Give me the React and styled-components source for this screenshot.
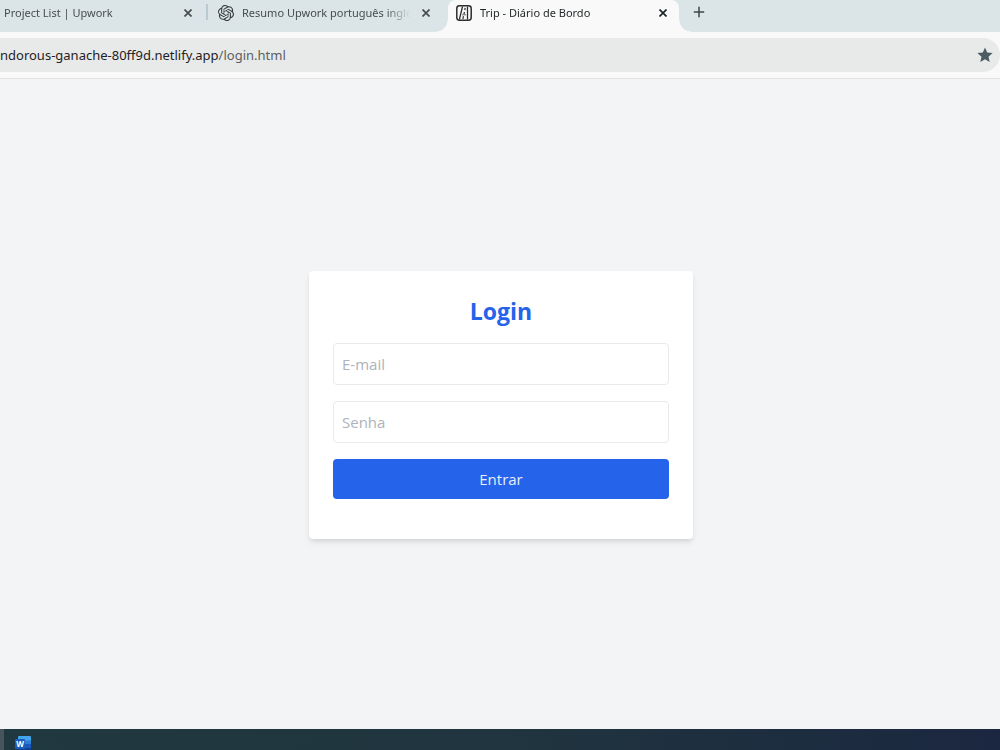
import React from 'react';
import styled, { createGlobalStyle } from 'styled-components';
import { SiOpenai } from 'react-icons/si';

const GlobalStyle = createGlobalStyle`
  *, *::before, *::after { box-sizing: border-box; }
  body {
    margin: 0;
    font-family: "Open Sans", "Noto Sans", sans-serif;
    background: #f2f4f6;
  }
  button, input { font: inherit; }
`;

const Screen = styled.div`
  min-height: 100vh;
  display: flex;
  flex-direction: column;
`;

const TabStrip = styled.nav`
  height: 32px;
  display: flex;
  background: #dbe4e7;
  overflow: hidden;
  font-family: "Noto Sans", "Open Sans", sans-serif;
`;

const Tab = styled.div`
  position: relative;
  flex: none;
  width: ${(p) => p.$width}px;
  height: 32px;
  padding: 0 ${(p) => p.$end}px 7px ${(p) => p.$start}px;
  display: flex;
  align-items: center;
  gap: 8px;
  font-size: 11px;
  line-height: 16px;
  color: ${(p) => (p.$active ? '#1f2426' : '#454d50')};
  background: ${(p) => (p.$active ? '#f9f9f9' : 'transparent')};
  border-radius: 8px 8px 0 0;

  &::before, &::after {
    content: ${(p) => (p.$active ? '""' : 'none')};
    position: absolute;
    bottom: 0;
    width: 12px;
    height: 12px;
  }
  &::before {
    right: 100%;
    background: radial-gradient(circle at 0 0, transparent 11px, #f9f9f9 12px);
  }
  &::after {
    left: 100%;
    background: radial-gradient(circle at 100% 0, transparent 11px, #f9f9f9 12px);
  }
`;

const TabTitle = styled.span`
  flex: 1;
  min-width: 0;
  overflow: hidden;
  white-space: nowrap;
  mask-image: linear-gradient(to left, transparent, #000 24px);
`;

const Divider = styled.span`
  flex: none;
  width: 2px;
  height: 16px;
  margin-top: 4px;
  background: #b9cbd1;
`;

const IconButton = styled.button`
  flex: none;
  width: 16px;
  height: 16px;
  padding: 0;
  border: 0;
  display: grid;
  place-items: center;
  background: none;
  color: inherit;
`;

const NewTab = styled(IconButton)`
  margin: 4px 0 0 12px;
  color: #3d474a;
`;

const Toolbar = styled.header`
  height: 47px;
  padding: 6px 0;
  background: #f9f9f9;
  border-bottom: 1px solid #e2e3e4;
`;

const AddressBar = styled.div`
  height: 34px;
  padding-right: 7px;
  display: flex;
  align-items: center;
  justify-content: space-between;
  background: #e8eaea;
  border-radius: 0 17px 17px 0;
  font-family: "Noto Sans", "Open Sans", sans-serif;
  font-size: 13px;
  line-height: 20px;
  color: #5b5f61;
`;

const Host = styled.span`
  color: #1f2224;
`;

const Main = styled.main`
  flex: 1;
  padding: 2px 0 0 2px;
  display: grid;
  place-items: center;
  background: #f2f4f6;
`;

const Card = styled.form`
  width: 100%;
  max-width: 384px;
  padding: 24px 24px 40px;
  display: flex;
  flex-direction: column;
  gap: 16px;
  background: #fff;
  border-radius: 4px;
  box-shadow: 0 4px 6px -1px rgba(0, 0, 0, 0.1), 0 2px 4px -1px rgba(0, 0, 0, 0.06);
`;

const Title = styled.h1`
  margin: 0;
  font-size: 23px;
  line-height: 32px;
  font-weight: 700;
  text-align: center;
  color: #2563eb;
`;

const Field = styled.input`
  width: 100%;
  height: 42px;
  padding: 8px;
  border: 1px solid #e8eaed;
  border-radius: 4px;
  background: #fff;
  font-size: 15px;
  line-height: 24px;
  &::placeholder { color: #adb2bb; opacity: 1; }
`;

const Submit = styled.button`
  height: 40px;
  padding: 8px;
  border: 0;
  border-radius: 4px;
  background: #2563eb;
  color: #e9effd;
  font-size: 15px;
  line-height: 24px;
`;

const Taskbar = styled.footer`
  height: 21px;
  padding: 6px 0 0 11px;
  overflow: hidden;
  border-left: 4px solid #48545b;
  background: linear-gradient(to right, #20383f, #20353f 50%, #1b2740);
`;

const CloseIcon = () => (
  <svg width="8" height="8" viewBox="0 0 8 8" stroke="currentColor" strokeWidth="1.7" aria-hidden="true">
    <path d="M.5.5l7 7M7.5.5l-7 7" />
  </svg>
);

const PlusIcon = () => (
  <svg width="12" height="12" viewBox="0 0 12 12" stroke="currentColor" strokeWidth="1.5" aria-hidden="true">
    <path d="M6 .8v10.4M.8 6h10.4" />
  </svg>
);

const StarIcon = () => (
  <svg width="16" height="16" viewBox="0 0 16 16" fill="#4b5d62" aria-hidden="true">
    <path d="M8 .6l2.2 5 5.4.5-4.1 3.6 1.2 5.3L8 12.200 3.3 15l1.2-5.3L.4 6.100l5.400-.5z" />
  </svg>
);

const RoadIcon = () => (
  <svg width="16" height="16" viewBox="0 0 16 16" fill="none" stroke="#2d2d2d" aria-hidden="true">
    <rect x=".8" y=".8" width="14.4" height="14.4" rx="2.6" strokeWidth="1.5" />
    <path d="M6.500 1.500L3.400 14.500M11.500 1.500v13" strokeWidth="1.3" />
    <path d="M9.200 2.800l-.4 2.400M8.400 7l-.4 2.200M7.400 11.200l-.4 2.800" strokeWidth="1.2" />
    <path d="M6 9.800h4" strokeWidth=".7" />
  </svg>
);

const WordIcon = () => (
  <svg width="16" height="16" viewBox="0 0 16 16" aria-label="Word">
    <path d="M3 1A1 1 0 014 0h11a1 1 0 011 1v4H3z" fill="#41a5ee" />
    <path d="M3 4.500h13V8H3z" fill="#2b7cd3" />
    <path d="M3 8h13v4H3z" fill="#185abd" />
    <path d="M3 12h13v2.500a1 1 0 01-1 1H4a1 1 0 01-1-1z" fill="#103f91" />
    <rect y="3" width="10" height="10" rx="1" fill="#1b5cc0" />
    <text x="5" y="11" textAnchor="middle" fontSize="8" fontWeight="700" fill="#fff">W</text>
  </svg>
);

const Close = () => (
  <IconButton type="button" aria-label="Fechar guia"><CloseIcon /></IconButton>
);

export default function App() {
  return (
    <Screen>
      <GlobalStyle />
      <TabStrip>
        <Tab $width={206} $start={4} $end={10}>
          <TabTitle>Project List | Upwork</TabTitle>
          <Close />
        </Tab>
        <Divider />
        <Tab $width={240} $start={10} $end={14}>
          <SiOpenai size={16} color="#333a3c" />
          <TabTitle>Resumo Upwork português inglês</TabTitle>
          <Close />
        </Tab>
        <Tab $active $width={231} $start={8} $end={8}>
          <RoadIcon />
          <TabTitle>Trip - Diário de Bordo</TabTitle>
          <Close />
        </Tab>
        <NewTab type="button" aria-label="Nova guia"><PlusIcon /></NewTab>
      </TabStrip>
      <Toolbar>
        <AddressBar>
          <span><Host>ndorous-ganache-80ff9d.netlify.app</Host>/login.html</span>
          <IconButton type="button" aria-label="Favorito"><StarIcon /></IconButton>
        </AddressBar>
      </Toolbar>
      <Main>
        <Card onSubmit={(e) => e.preventDefault()}>
          <Title>Login</Title>
          <Field type="email" placeholder="E-mail" aria-label="E-mail" />
          <Field type="password" placeholder="Senha" aria-label="Senha" />
          <Submit type="submit">Entrar</Submit>
        </Card>
      </Main>
      <Taskbar><WordIcon /></Taskbar>
    </Screen>
  );
}
